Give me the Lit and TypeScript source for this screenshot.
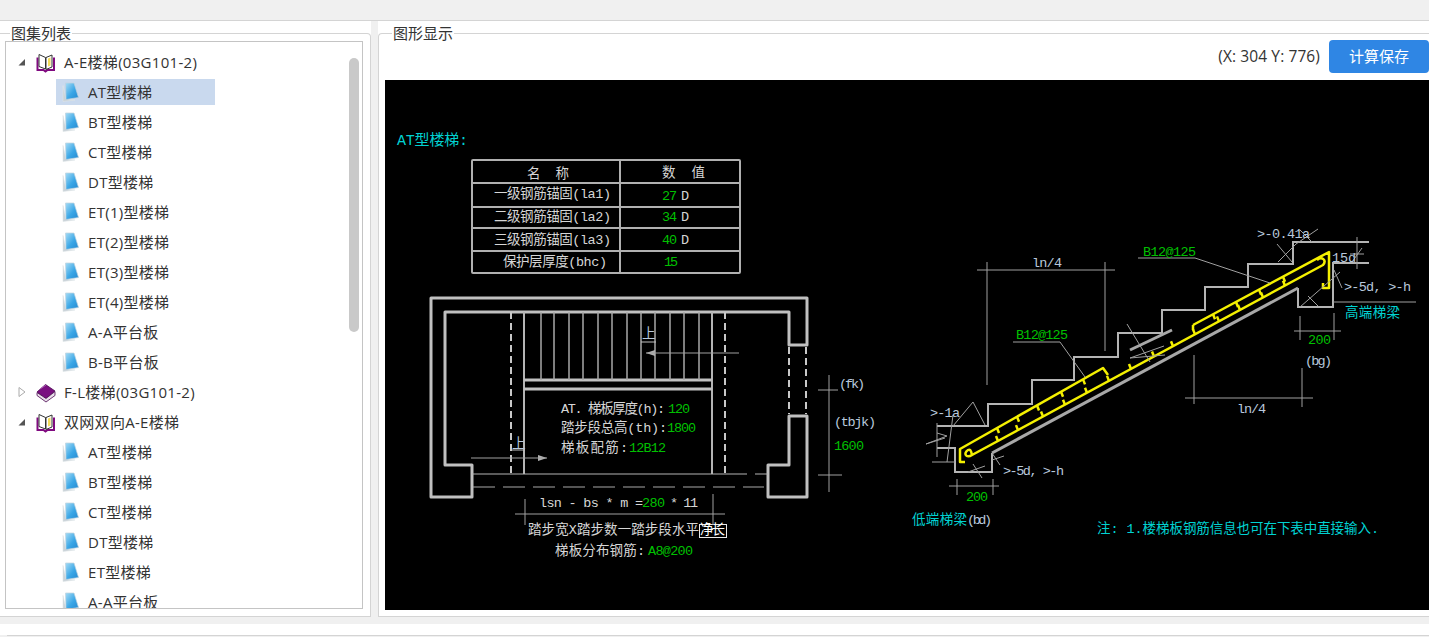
import { LitElement, html, css, svg } from 'lit';
import { customElement } from 'lit/decorators.js';

type Row = { label: string; level: number; open?: boolean; selected?: boolean };

const ROWS: Row[] = [
  { label: 'A-E楼梯(03G101-2)', level: 0, open: true },
  { label: 'AT型楼梯', level: 1, selected: true },
  { label: 'BT型楼梯', level: 1 },
  { label: 'CT型楼梯', level: 1 },
  { label: 'DT型楼梯', level: 1 },
  { label: 'ET(1)型楼梯', level: 1 },
  { label: 'ET(2)型楼梯', level: 1 },
  { label: 'ET(3)型楼梯', level: 1 },
  { label: 'ET(4)型楼梯', level: 1 },
  { label: 'A-A平台板', level: 1 },
  { label: 'B-B平台板', level: 1 },
  { label: 'F-L楼梯(03G101-2)', level: 0, open: false },
  { label: '双网双向A-E楼梯', level: 0, open: true },
  { label: 'AT型楼梯', level: 1 },
  { label: 'BT型楼梯', level: 1 },
  { label: 'CT型楼梯', level: 1 },
  { label: 'DT型楼梯', level: 1 },
  { label: 'ET型楼梯', level: 1 },
  { label: 'A-A平台板', level: 1 },
];

const W = '#d6d6d6';
const G = '#00c000';
const C = '#00d2d2';
const B = '#b8c8dc';

// x, centre y, width, text, colour
const LABELS: [number, number, number, string, string][] = [
  [527, 174, 42, '名  称', W],
  [662, 173, 43, '数  值', W],
  [494, 194, 117, '一级钢筋锚固(la1)', W],
  [494, 217, 117, '二级钢筋锚固(la2)', W],
  [494, 240, 117, '三级钢筋锚固(la3)', W],
  [503, 262, 104, '保护层厚度(bhc)', W],
  [662, 196, 15, '27', G],
  [681, 196, 7, 'D', W],
  [662, 217, 15, '34', G],
  [681, 217, 7, 'D', W],
  [662, 240, 15, '40', G],
  [681, 240, 7, 'D', W],
  [664, 262, 14, '15', G],
  [561, 409, 104, 'AT. 梯板厚度(h):', W],
  [668, 409, 22, '120', G],
  [561, 428, 106, '踏步段总高(th):', W],
  [667, 428, 29, '1800', G],
  [561, 448, 67, '梯板配筋:', W],
  [629, 448, 37, '12B12', G],
  [539, 503, 104, 'lsn - bs * m =', W],
  [642, 503, 23, '280', G],
  [670, 503, 28, '* 11', W],
  [528, 530, 171, '踏步宽X踏步数一踏步段水平', W],
  [700, 530, 25, '净长', '#ffffff'],
  [555, 551, 90, '梯板分布钢筋:', W],
  [648, 551, 45, 'A8@200', G],
  [839, 384, 26, '(fk)', B],
  [834, 422, 42, '(tbjk)', B],
  [834, 446, 30, '1600', G],
  [1032, 263, 30, 'ln/4', B],
  [1237, 409, 29, 'ln/4', B],
  [1143, 252, 53, 'B12@125', G],
  [1016, 335, 52, 'B12@125', G],
  [1257, 234, 53, '>-0.41a', B],
  [1332, 258, 24, '15d', B],
  [1344, 287, 67, '>-5d, >-h', B],
  [1345, 313, 55, '高端梯梁', C],
  [1308, 340, 23, '200', G],
  [1305, 361, 27, '(bg)', B],
  [930, 413, 30, '>-1a', B],
  [1003, 471, 61, '>-5d, >-h', B],
  [966, 497, 22, '200', G],
  [912, 520, 55, '低端梯梁', C],
  [967, 520, 25, '(bd)', B],
  [1097, 529, 282, '注: 1.楼梯板钢筋信息也可在下表中直接输入.', C],
];

const TREADS = [541, 554, 569, 583, 598, 612, 627, 641, 655, 670, 684, 699];

// thin dimension and leader lines
const THIN: number[][] = [
  [646, 353, 739, 353], [471, 458, 547, 458],
  [515, 514, 725, 514], [525, 499, 525, 525], [713, 494, 713, 525],
  [829, 375, 829, 492], [818, 390, 838, 390], [818, 475, 842, 475],
  [977, 270, 1115, 270], [987, 262, 987, 385], [1105, 262, 1105, 351],
  [1185, 398, 1313, 398], [1194, 355, 1194, 404], [1302, 368, 1302, 407],
  [1294, 331, 1341, 331], [1300, 316, 1300, 340], [1334, 313, 1334, 340],
  [1333, 302, 1416, 302], [1357, 237, 1357, 269],
  [949, 486, 999, 486], [957, 479, 957, 495], [993, 479, 993, 495],
  [1013, 342, 1060, 342], [1060, 342, 1085, 377],
  [1138, 258, 1195, 258], [1195, 258, 1270, 283],
  [937, 423, 937, 457], [926, 444, 945, 438], [937, 433, 947, 436], [926, 444, 947, 436],
  [932, 462, 955, 462], [947, 462, 953, 415], [953, 426, 973, 402], [973, 402, 985, 425],
  [968, 472, 985, 466], [973, 464, 982, 478],
  [992, 460, 1004, 456], [992, 453, 1000, 465],
  [1127, 324, 1150, 362], [1130, 358, 1165, 355], [1130, 358, 1164, 346],
  [1278, 262, 1296, 244], [1277, 244, 1292, 262], [1296, 244, 1318, 229], [1300, 230, 1312, 242],
  [1300, 307, 1340, 272], [1308, 296, 1318, 306], [1334, 270, 1342, 288],
  [1350, 254, 1364, 254], [1352, 262, 1362, 248],
];

// the two bars of the section, as straight lines
const upperLeft = (x: number) => 449 - (x - 960) * 0.566;
const upperRight = (x: number) => 252 + (1329 - x) * 0.537;
const lower = (x: number) => 455 - (x - 972) * 0.541;

// short marks hanging off the bars, [x, y on bar, direction]
const TICKS: number[][] = [
  ...[997, 1017, 1037, 1061, 1083].map(x => [x, upperLeft(x), 1]),
  ...[1213, 1236, 1259, 1283].map(x => [x, upperRight(x), 1]),
  ...[998, 1018, 1043, 1065, 1087, 1109, 1131, 1154, 1173, 1195, 1219, 1240, 1263, 1285].map(x => [x, lower(x), -1]),
];

const bookOpen = svg`<svg class="icon book" viewBox="0 0 20 21">
  <path d="M1.500 5.500v12.500h6l2 1.500 2-1.500h6.500V5.500" fill="none" stroke="#800a80" stroke-width="2"/>
  <path d="M3 2.500l6.500 3v11.500L3 14.500z" fill="#fff" stroke="#333" stroke-width="1"/>
  <path d="M10 5.500l6-2.500v12l-6 2.500z" fill="#fff" stroke="#333" stroke-width="1"/>
  <path d="M12 6.500l2.500-1v8l-2.500 1z" fill="#f3dc58"/>
</svg>`;

const bookClosed = svg`<svg class="icon book" viewBox="0 0 20 21">
  <path d="M9.500 2.500L19 9l-9 7.500L1 10z" fill="#7a0f80" stroke="#4a0650" stroke-width=".8"/>
  <path d="M1 10.500v3l9 6.500 9-6.500v-4L10 16.500z" fill="#e8e0e8" stroke="#4a0650" stroke-width=".8"/>
  <path d="M4 7l6-4" stroke="#b060b8" stroke-width="1"/>
</svg>`;

const leaf = svg`<svg class="icon leaf" viewBox="0 0 18 20">
  <defs><linearGradient id="lf" x1="0" y1="0" x2="1" y2="1">
    <stop offset="0" stop-color="#a6dcf5"/><stop offset=".55" stop-color="#3aa6e6"/><stop offset="1" stop-color="#2488d0"/>
  </linearGradient></defs>
  <path d="M1 3.500v16l12-1.500L4 17z" fill="#c9d2d8" stroke="#dfe5e8" stroke-width=".6"/>
  <path d="M3.500 1h8.500l4.500 14.500-12.500 2z" fill="url(#lf)" stroke="#c0d2de" stroke-width=".7"/>
</svg>`;

@customElement('app-root')
export class AppRoot extends LitElement {
  static styles = css`
    :host {
      display: flex;
      flex-direction: column;
      width: 1429px;
      height: 637px;
      overflow: hidden;
      background: #f0f0f0;
      font-family: "Open Sans", "Noto Sans CJK SC", sans-serif;
      color: #333;
    }
    .top {
      height: 20px;
      flex: none;
      border-bottom: 1px solid #d4d4d4;
    }
    .main {
      display: flex;
      gap: 7px;
      flex: none;
      height: 596px;
    }
    .panel {
      background: #fff;
      padding-top: 4px;
      box-sizing: border-box;
      height: 596px;
    }
    .panel.left { width: 371px; }
    .panel.right { flex: 1; }
    fieldset {
      margin: 0;
      padding: 0;
      min-width: 0;
      box-sizing: border-box;
      height: 592px;
      border: 1px solid #d4d4d4;
    }
    .left fieldset {
      border-left: none;
      border-top-right-radius: 4px;
      padding-left: 5px;
      padding-right: 7px;
    }
    .right fieldset {
      border-right: none;
      border-top-left-radius: 4px;
      padding-left: 6px;
    }
    legend {
      font-size: 15px;
      line-height: 16px;
      padding: 0 1px;
      color: #333;
    }
    .left legend { margin-left: 5px; }
    .right legend { margin-left: 7px; }
    .tree {
      position: relative;
      height: 568px;
      box-sizing: border-box;
      border: 1px solid #c4c4c4;
      padding-top: 5px;
      overflow: hidden;
    }
    .row {
      height: 30px;
      display: flex;
      align-items: center;
      font-size: 15px;
      letter-spacing: 0.3px;
      white-space: nowrap;
    }
    .row span { margin-top: -2px; }
    .row.l0 { padding-left: 12px; }
    .row.l1 { padding-left: 50px; }
    .row .cell {
      display: flex;
      align-items: center;
      height: 26px;
      width: 159px;
      box-sizing: border-box;
      padding-left: 6px;
    }
    .row.sel .cell { background: #c9d9ee; }
    .twist { width: 8px; height: 10px; flex: none; margin-right: 10px; }
    .icon { flex: none; display: block; }
    .book { width: 20px; height: 21px; margin-right: 8px; }
    .leaf { width: 18px; height: 20px; margin-right: 8px; }
    .scroll {
      position: absolute;
      top: 16px;
      right: 3px;
      width: 10px;
      height: 274px;
      border-radius: 5px;
      background: #c9c9c9;
    }
    .bar {
      height: 40px;
      margin-top: -1px;
      display: flex;
      align-items: flex-start;
      justify-content: flex-end;
      gap: 9px;
      font-size: 15.500px;
      letter-spacing: 0.1px;
      line-height: 33px;
    }
    button {
      width: 100px;
      height: 33px;
      border: none;
      border-radius: 4px;
      background: #2f86e4;
      color: #fff;
      font: inherit;
      font-size: 15px;
      line-height: 33px;
      padding: 0;
    }
    .cad {
      display: block;
      width: 1044px;
      height: 530px;
      background: #000;
    }
    .cad text {
      font-family: "Liberation Mono", "Noto Sans CJK SC", monospace;
      font-size: 13.500px;
      dominant-baseline: central;
      white-space: pre;
    }
    .cad text.title { font-size: 15px; }
    .wall { fill: none; stroke: #c0c0c0; stroke-width: 3; stroke-linejoin: round; }
    .grid { fill: none; stroke: #b0b0b0; stroke-width: 2; }
    .mid { fill: none; stroke: #b4b4b4; stroke-width: 2; }
    .slope { fill: none; stroke: #a8a8a8; stroke-width: 3; }
    .thin { stroke: #a0a0a0; stroke-width: 1; }
    .tread { stroke: #a8a8a8; stroke-width: 1.500; }
    .dash { fill: none; stroke: #c8c8c8; stroke-width: 2; stroke-dasharray: 7 4; }
    .longdash { fill: none; stroke: #a8a8a8; stroke-width: 1; stroke-dasharray: 22 8; }
    .hair { fill: none; stroke: #b4b4b4; stroke-width: 1; }
    .rebar { fill: none; stroke: #f4f000; stroke-width: 2.500; stroke-linejoin: round; }
    .tie { stroke: #f4f000; stroke-width: 2.500; }
    .bottom {
      height: 11px;
      margin-top: 7px;
      flex: none;
      background: #fff;
    }
    .foot {
      flex: 1;
      margin-left: 7px;
      border-top: 1px solid #d4d4d4;
    }
  `;

  renderRow(r: Row) {
    if (r.level === 0) {
      return html`<div class="row l0">
        <svg class="twist" viewBox="0 0 8 10">
          ${r.open
            ? svg`<path d="M7 2v6.500H.5z" fill="#555"/>`
            : svg`<path d="M1 .5l6 4.500-6 4.500z" fill="#fff" stroke="#aaa"/>`}
        </svg>
        ${r.open ? bookOpen : bookClosed}
        <span>${r.label}</span>
      </div>`;
    }
    return html`<div class="row l1 ${r.selected ? 'sel' : ''}">
      <div class="cell">${leaf}<span>${r.label}</span></div>
    </div>`;
  }

  renderCad() {
    return html`<svg class="cad" viewBox="385 80 1044 530">
      <!-- schedule table -->
      <rect class="grid" x="472" y="160" width="268" height="113" rx="1"/>
      <path class="grid" d="M620 160V273M472 183H740M472 207H740M472 228H740M472 251H740"/>

      <!-- stair plan -->
      <path class="wall" d="M431 298H807V345H789V312H445V465H472V497H431Z"/>
      <path class="wall" d="M789 416H807V497H768V465H789Z"/>
      <path class="mid" d="M524 312V474M712 312V474"/>
      <path class="wall" d="M524 380H712M524 389H712"/>
      ${TREADS.map(x => svg`<line class="tread" x1=${x} y1="312" x2=${x} y2="380"/>`)}
      <path class="dash" d="M511 312V474M725 312V474M789 347V414M806 347V414"/>
      <path class="hair" d="M472 474H747M755 474H768"/>
      <path class="longdash" d="M473 487H764"/>
      <path d="M646 353l9-3v6z" fill="#b0b0b0"/>
      <path d="M547 458l-9-3v6z" fill="#b0b0b0"/>
      <path d="M641 342H656" stroke="#c0c0c0"/>
      <path d="M512 450H525" stroke="#c0c0c0"/>
      <text x="642" y="334" fill=${B}>上</text>
      <text x="512" y="444" fill=${B}>上</text>
      <rect x="699.500" y="524.500" width="27" height="13" fill="none" stroke="#e8e8e8"/>

      <!-- stair section -->
      <path class="mid" d="M937 426H988V404H1032V380H1074V357H1118V333H1162V310H1205V287H1248V264H1293V242H1369"/>
      <path class="mid" d="M937 448H955V472H992V453M1298 288V307H1333V263H1369"/>
      <path class="slope" d="M992 453L1298 288"/>
      <path class="rebar" d="M965 462H960V449L1103 368L1108 375"/>
      <path class="rebar" d="M1193 325L1329 252V288H1323V283"/>
      <path class="rebar" d="M1193 325V330"/>
      <path class="rebar" d="M972 455C966 459 963 453 968 450C970 449 971 450 972 455L1323 265C1327 260 1322 256 1317 260"/>
      ${TICKS.map(([x, y, d]) => svg`<line class="tie" x1=${x} y1=${y} x2=${x + d * 2} y2=${y + d * 5}/>`)}

      ${THIN.map(l => svg`<line class="thin" x1=${l[0]} y1=${l[1]} x2=${l[2]} y2=${l[3]}/>`)}
      <path class="slope" d="M1130 350L1172 330" />

      <text class="title" x="397" y="141" fill=${C} textLength="71" lengthAdjust="spacing">AT型楼梯:</text>
      ${LABELS.map(
        ([x, y, w, t, c]) =>
          svg`<text x=${x} y=${y} fill=${c} textLength=${w} lengthAdjust="spacing">${t}</text>`,
      )}
    </svg>`;
  }

  render() {
    return html`
      <div class="top"></div>
      <div class="main">
        <div class="panel left">
          <fieldset>
            <legend>图集列表</legend>
            <div class="tree">
              ${ROWS.map(r => this.renderRow(r))}
              <div class="scroll"></div>
            </div>
          </fieldset>
        </div>
        <div class="panel right">
          <fieldset>
            <legend>图形显示</legend>
            <div class="bar">
              <span>(X: 304 Y: 776)</span>
              <button>计算保存</button>
            </div>
            ${this.renderCad()}
          </fieldset>
        </div>
      </div>
      <div class="bottom"></div>
      <div class="foot"></div>
    `;
  }
}
